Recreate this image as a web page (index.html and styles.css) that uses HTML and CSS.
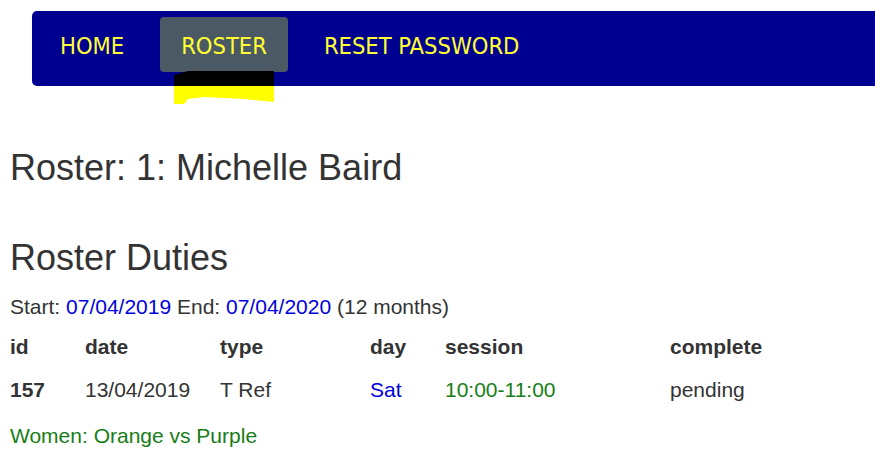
FILE: index.html
```html
<!DOCTYPE html>
<html lang="en">
<head>
    <meta charset="UTF-8">
    <title>Roster</title>
    <link rel="stylesheet" href="styles.css">
</head>
<body>
    <nav class="topnav">
        <a href="#" class="nav-item">HOME</a>
        <a href="#" class="nav-item active">ROSTER</a>
        <a href="#" class="nav-item">RESET PASSWORD</a>
        <svg class="marker" width="100" height="34" viewBox="0 0 100 34">
            <path d="M0 4 L14 0 L100 0 L100 15 L0 15 Z" fill="#000"/>
            <path d="M0 15 L100 15 L100 31 L70 28 L30 26 L14 28 L10 33 L0 33 Z" fill="#ffff00"/>
        </svg>
    </nav>

    <h1>Roster: 1: Michelle Baird</h1>

    <h2>Roster Duties</h2>
    <p class="period">Start: <span class="blue">07/04/2019</span> End: <span class="blue">07/04/2020</span> (12 months)</p>

    <div class="duties">
        <div class="row head">
            <span>id</span><span>date</span><span>type</span><span>day</span><span>session</span><span>complete</span>
        </div>
        <div class="row">
            <span class="bold">157</span><span>13/04/2019</span><span>T Ref</span><span class="blue">Sat</span><span class="green">10:00-11:00</span><span>pending</span>
        </div>
    </div>
    <p class="match green">Women: Orange vs Purple</p>
</body>
</html>
```

FILE: styles.css
```css
body {
    margin: 0;
    padding: 11px 10px 0 10px;
    font-family: 'Liberation Sans', Arial, sans-serif;
    font-size: 21px;
    color: #333;
    background-color: white;
}
.topnav {
    position: relative;
    display: flex;
    gap: 15px;
    margin-left: 22px;
    margin-right: -30px;
    padding: 6px 7px 14px 7px;
    background-color: #000090;
    border-radius: 5px;
}
.nav-item {
    display: block;
    padding: 3px 21px 0 21px;
    height: 52px;
    line-height: 52px;
    font-family: 'DejaVu Sans Condensed', 'DejaVu Sans', sans-serif;
    font-size: 23.5px;
    color: #ffff33;
    text-decoration: none;
    border-radius: 4px;
}
.nav-item.active {
    background-color: #4a5963;
}
.marker {
    position: absolute;
    left: 142px;
    top: 60px;
}
h1, h2 {
    font-weight: normal;
    font-size: 36px;
    line-height: 1.1;
    margin: 0;
}
h1 {
    margin-top: 62px;
}
h2 {
    margin-top: 50px;
}
.period {
    margin: 15px 0 0 0;
    line-height: 29px;
}
.duties {
    margin-top: 4px;
}
.row {
    display: grid;
    grid-template-columns: 75px 135px 150px 75px 225px auto;
    padding: 7px 0;
    line-height: 29px;
}
.head, .bold {
    font-weight: bold;
}
.blue {
    color: #0000dd;
}
.green {
    color: #177d17;
}
.match {
    margin: 10px 0 0 0;
    line-height: 29px;
}
```
